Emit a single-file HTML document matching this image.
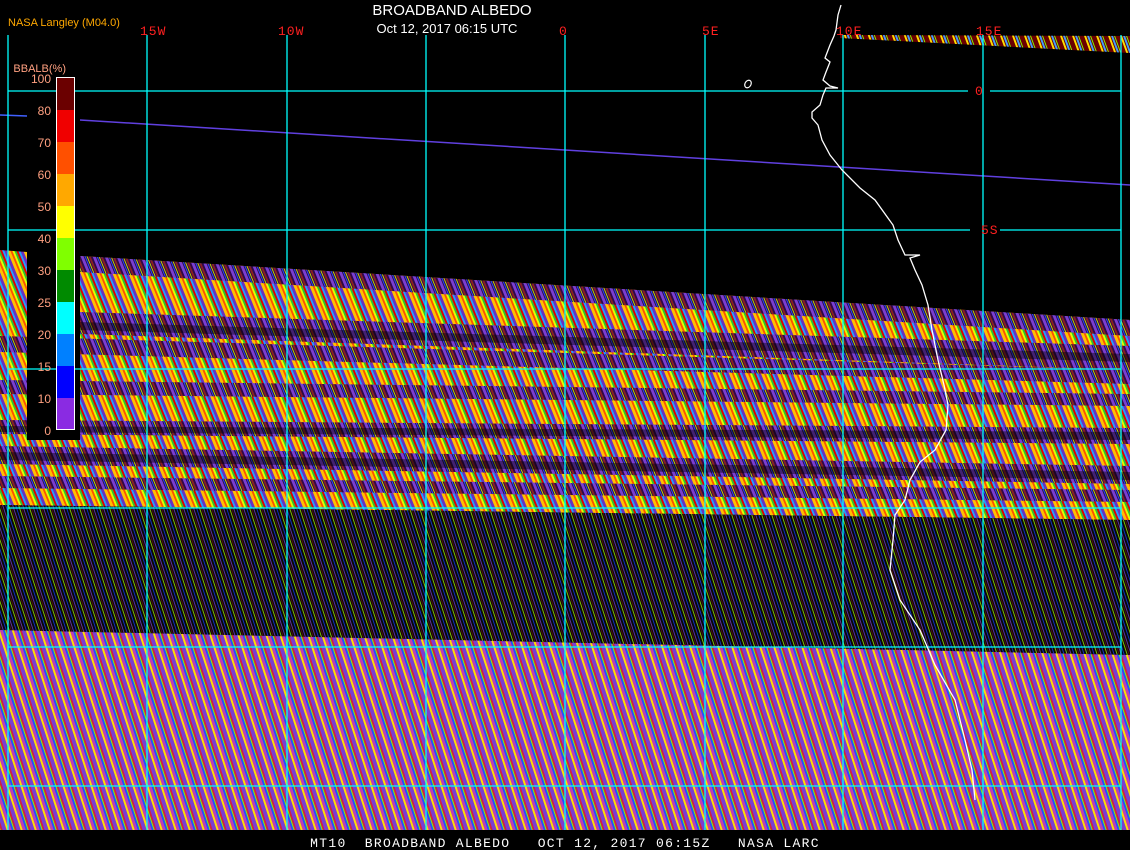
<!DOCTYPE html>
<html><head><style>
body{margin:0;background:#000;width:1130px;height:850px;overflow:hidden;font-family:"Liberation Sans",sans-serif}
</style></head><body>
<svg width="1130" height="850" xmlns="http://www.w3.org/2000/svg" style="position:absolute;left:0;top:0">
<defs>
<pattern id="pb" width="14" height="14" patternUnits="userSpaceOnUse" patternTransform="skewX(18)">
<rect width="14" height="14" fill="#7a3fd0"/>
<rect x="3" width="2" height="14" fill="#ffe000"/>
<rect x="5" width="3" height="14" fill="#c040b0"/>
<rect x="8" width="2" height="14" fill="#2050ff"/>
<rect x="10" width="1" height="14" fill="#80ff00"/>
<rect x="11" width="2" height="14" fill="#d02040"/>
</pattern>
<pattern id="pd" width="10" height="10" patternUnits="userSpaceOnUse" patternTransform="skewX(18)">
<rect width="10" height="10" fill="#080808"/>
<rect x="1" width="1" height="10" fill="#1030c0"/>
<rect x="4" width="1" height="10" fill="#80c000"/>
<rect x="6" width="1" height="10" fill="#501010"/>
<rect x="8" width="1" height="10" fill="#6030a0"/>
</pattern>
<pattern id="py" width="16" height="16" patternUnits="userSpaceOnUse" patternTransform="skewX(22)">
<rect width="16" height="16" fill="#6a30c0"/>
<rect x="2" width="3" height="16" fill="#ffc000"/>
<rect x="5" width="2" height="16" fill="#ff5000"/>
<rect x="7" width="2" height="16" fill="#e0ff00"/>
<rect x="9" width="2" height="16" fill="#30c030"/>
<rect x="11" width="2" height="16" fill="#e00000"/>
<rect x="13" width="2" height="16" fill="#20a0ff"/>
</pattern>
<pattern id="pm" width="12" height="12" patternUnits="userSpaceOnUse" patternTransform="skewX(22)">
<rect width="12" height="12" fill="#300848"/>
<rect x="1" width="3" height="12" fill="#7a3fd0"/>
<rect x="5" width="1" height="12" fill="#2050ff"/>
<rect x="7" width="1" height="12" fill="#c0e000"/>
<rect x="9" width="2" height="12" fill="#8a2020"/>
</pattern>
<pattern id="pr" width="12" height="12" patternUnits="userSpaceOnUse" patternTransform="skewX(20)">
<rect width="12" height="12" fill="#6a0000"/>
<rect x="3" width="2" height="12" fill="#ffe000"/>
<rect x="6" width="2" height="12" fill="#40a0ff"/>
<rect x="9" width="1" height="12" fill="#80ff00"/>
</pattern>
</defs>
<polygon points="0,250 27,252 27,440 80,440 80,256 1130,320 1130,520 0,505" fill="url(#py)"/>
<g fill="url(#pm)">
<polygon points="80,256 1130,320 1130,336 80,272"/>
<polygon points="80,312 1130,346 1130,370 80,334"/>
<polygon points="0,336 1130,370 1130,384 0,352"/>
<polygon points="0,380 1130,394 1130,406 0,394"/>
<polygon points="0,420 1130,428 1130,444 0,434"/>
<polygon points="0,446 1130,466 1130,484 0,464"/>
<polygon points="0,476 1130,490 1130,502 0,488"/>
</g>
<g fill="#000" opacity="0.45">
<polygon points="80,322 1130,354 1130,362 80,330"/>
<polygon points="0,426 1130,432 1130,440 0,432"/>
<polygon points="0,452 1130,472 1130,480 0,460"/>
</g>
<rect x="27" y="250" width="53" height="190" fill="#000"/>
<polygon points="0,505 1130,520 1130,655 0,630" fill="url(#pd)"/>
<polygon points="0,630 1130,655 1130,830 0,830" fill="url(#pb)"/>
<polygon points="840,35 1130,36 1130,53 840,38" fill="url(#pr)"/>
<polyline points="0,115 27,116" stroke="#4060ff" stroke-width="1.5"/>
<polyline points="80,120 1130,185" stroke="#6040e0" stroke-width="1.5"/>
<g stroke="#00ffff" stroke-width="1.3">
<line x1="8" y1="35" x2="8" y2="830"/><line x1="147" y1="35" x2="147" y2="830"/>
<line x1="287" y1="35" x2="287" y2="830"/><line x1="426" y1="35" x2="426" y2="830"/>
<line x1="565" y1="35" x2="565" y2="830"/><line x1="705" y1="35" x2="705" y2="830"/>
<line x1="843" y1="35" x2="843" y2="830"/><line x1="983" y1="35" x2="983" y2="830"/>
<line x1="1121" y1="35" x2="1121" y2="830"/>
<line x1="8" y1="91" x2="968" y2="91"/><line x1="990" y1="91" x2="1121" y2="91"/>
<line x1="8" y1="230" x2="970" y2="230"/><line x1="1000" y1="230" x2="1121" y2="230"/>
<line x1="8" y1="369" x2="1121" y2="369"/><line x1="8" y1="508" x2="1121" y2="508"/>
<line x1="8" y1="647" x2="1121" y2="647"/><line x1="8" y1="786" x2="1121" y2="786"/>
</g>
<polyline fill="none" stroke="#fff" stroke-width="1.3" points="841,5 838,15 836,30 834,36 830,45 825,58 830,62 826,72 823,80 830,86 838,88 826,88 823,95 820,105 812,112 812,118 818,125 822,140 830,155 842,170 860,188 875,200 893,225 898,240 905,255 920,255 910,258 915,270 922,285 928,305 932,330 938,360 944,385 948,405 946,430 935,450 920,462 910,480 905,500 895,515 893,540 890,570 900,600 920,630 935,665 955,700 965,740 972,770 975,800"/>
<ellipse cx="748" cy="84" rx="3" ry="4" fill="none" stroke="#fff" stroke-width="1.2" transform="rotate(30 748 84)"/>
<rect x="56" y="77" width="19" height="353" fill="#fff"/>
<g>
<rect x="57" y="78" width="17" height="32" fill="#6b0000"/>
<rect x="57" y="110" width="17" height="32" fill="#f00000"/>
<rect x="57" y="142" width="17" height="32" fill="#ff5000"/>
<rect x="57" y="174" width="17" height="32" fill="#ffa800"/>
<rect x="57" y="206" width="17" height="32" fill="#ffff00"/>
<rect x="57" y="238" width="17" height="32" fill="#80ff00"/>
<rect x="57" y="270" width="17" height="32" fill="#008a00"/>
<rect x="57" y="302" width="17" height="32" fill="#00ffff"/>
<rect x="57" y="334" width="17" height="32" fill="#0080ff"/>
<rect x="57" y="366" width="17" height="32" fill="#0000ff"/>
<rect x="57" y="398" width="17" height="31" fill="#8a2be2"/>
</g>
<g fill="#ffa080" font-family="Liberation Sans, sans-serif" font-size="12" text-anchor="end">
<text x="51" y="83">100</text><text x="51" y="115">80</text><text x="51" y="147">70</text>
<text x="51" y="179">60</text><text x="51" y="211">50</text><text x="51" y="243">40</text>
<text x="51" y="275">30</text><text x="51" y="307">25</text><text x="51" y="339">20</text>
<text x="51" y="371">15</text><text x="51" y="403">10</text><text x="51" y="435">0</text>
<text x="66" y="72" font-size="11" text-anchor="end">BBALB(%)</text>
</g>
<g fill="#ff2020" font-family="Liberation Mono, monospace" font-size="13" letter-spacing="1">
<text x="140" y="35">15W</text><text x="278" y="35">10W</text><text x="559" y="35">0</text>
<text x="702" y="35">5E</text><text x="836" y="35">10E</text><text x="976" y="35">15E</text>
<text x="975" y="95">0</text><text x="981" y="234">5S</text>
</g>
<text x="8" y="26" fill="#ffa800" font-size="11">NASA Langley (M04.0)</text>
<text x="452" y="15" fill="#fff" font-size="15" text-anchor="middle">BROADBAND ALBEDO</text>
<text x="447" y="33" fill="#fff" font-size="13" text-anchor="middle">Oct 12, 2017 06:15 UTC</text>
<rect x="0" y="831" width="1130" height="19" fill="#000"/>
<text x="565" y="847" fill="#fff" font-family="Liberation Mono, monospace" font-size="13" letter-spacing="1.3" text-anchor="middle" xml:space="preserve">MT10  BROADBAND ALBEDO   OCT 12, 2017 06:15Z   NASA LARC</text>
</svg>
</body></html>
